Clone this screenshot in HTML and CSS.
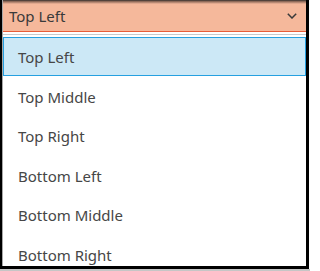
FILE: index.html
```html
<!DOCTYPE html>
<html>
<head>
<meta charset="utf-8">
<link rel="stylesheet" href="styles.css">
</head>
<body>
<div class="frame">
  <div class="inner">
    <div class="select">
      <span class="value">Top Left</span>
      <svg class="chevron" width="10" height="6" viewBox="0 0 10 6"><polyline points="0.8,0.8 5,5 9.2,0.8" fill="none" stroke="#3a3a3a" stroke-width="1.5"/></svg>
    </div>
    <ul class="list">
      <li class="item active">Top Left</li>
      <li class="item">Top Middle</li>
      <li class="item">Top Right</li>
      <li class="item">Bottom Left</li>
      <li class="item">Bottom Middle</li>
      <li class="item">Bottom Right</li>
    </ul>
  </div>
</div>
<div class="shade"></div>
</body>
</html>
```
FILE: styles.css
```css
* { box-sizing: border-box; }
html, body { margin: 0; padding: 0; }
body {
  width: 310px;
  height: 271px;
  overflow: hidden;
  background: #ffffff;
  font-family: "Noto Sans", "Open Sans", sans-serif;
  font-size: 15px;
}
.frame {
  width: 309px;
  height: 269px;
  border-left: 2px solid #000;
  border-right: 3px solid #000;
  border-bottom: 3px solid #000;
  overflow: hidden;
  background: #ffffff;
}
.inner {
  height: 100%;
  border-left: 1px solid #a8a8a8;
}
.select {
  height: 32px;
  display: flex;
  align-items: center;
  justify-content: space-between;
  padding: 1px 6px 0 6px;
  background: linear-gradient(to bottom, #2a2a2a 0px, #7a5a4c 1px, #f5b89b 4px);
  border-bottom: 1px solid #e85c38;
  color: #3a3a3a;
}
.chevron { margin-right: 3px; margin-top: -1px; }
.list {
  list-style: none;
  margin: 2px 0 0 0;
  padding: 2px 0 0 0;
  border-top: 1px solid #cacaca;
}
.item {
  height: 39.4px;
  display: flex;
  align-items: center;
  padding: 2px 0 0 15px;
  color: #464646;
}
.item.active {
  background: #cce8f6;
  border: 1px solid #26a0e0;
  padding-left: 14px;
  padding-top: 1px;
}
.shade {
  height: 2px;
  background: #c6c6c6;
}
```
